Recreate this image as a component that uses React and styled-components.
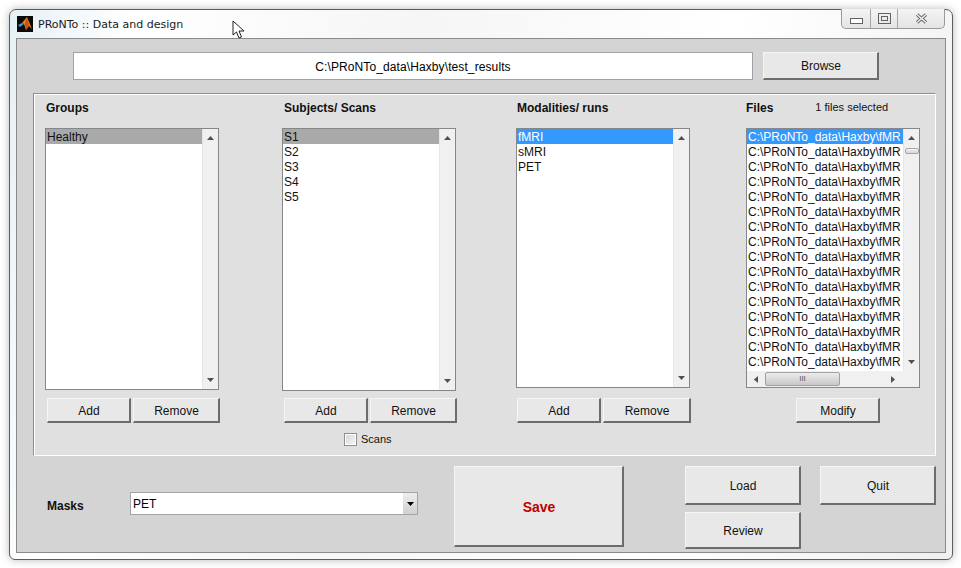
import styled, { createGlobalStyle } from "styled-components";

const GlobalStyle = createGlobalStyle`
    html, body {
        margin: 0;
        padding: 0;
        background: #ffffff;
    }
    body {
        font-family: "Liberation Sans", Arial, sans-serif;
        font-size: 12px;
        color: #000000;
    }
`

const fileRows = Array.from({ length: 16 }, () => "C:\\PRoNTo_data\\Haxby\\fMR")

const columns = [
    { title: "Groups", indent: 1, items: ["Healthy"], selected: "gray", height: 262, addLeft: 2, addWidth: 84, removeWidth: 87 },
    { title: "Subjects/ Scans", indent: 2, items: ["S1", "S2", "S3", "S4", "S5"], selected: "gray", height: 263, addLeft: 2, addWidth: 84, removeWidth: 87, scans: true },
    { title: "Modalities/ runs", indent: 1, items: ["fMRI", "sMRI", "PET"], selected: "blue", height: 260, addLeft: 1, addWidth: 84, removeWidth: 88 },
]

function TriangleUp() {
    return <svg width="7" height="4" viewBox="0 0 7 4"><path d="M3.5 0 L7 4 L0 4 Z" fill="#505050" /></svg>
}

function TriangleDown({ color = "#505050" }) {
    return <svg width="7" height="4" viewBox="0 0 7 4"><path d="M0 0 L7 0 L3.5 4 Z" fill={color} /></svg>
}

function MatlabIcon() {
    return (
        <svg width="16" height="16" viewBox="0 0 16 16">
            <rect width="16" height="16" fill="#0a0a0a" />
            <path d="M1 9 L5 7 L7 8 L3 11 Z" fill="#3a9fd0" />
            <path d="M5 7 L10 1 L15 13 L12 10 L9 14 L7 8 Z" fill="#e8801e" />
            <path d="M10 1 L12 10 L9 14 L8 8 Z" fill="#c4501a" />
        </svg>
    )
}

function Cursor() {
    return (
        <svg width="14" height="20" viewBox="0 0 14 20">
            <path d="M1 1 L1 15 L4.5 12 L7 18 L9.5 17 L7 11 L12 11 Z" fill="#ffffff" stroke="#222222" strokeWidth="1" />
        </svg>
    )
}

function VerticalBar({ thumb }) {
    return (
        <VBar>
            <TriangleUp />
            {thumb && <VThumb />}
            <TriangleDown />
        </VBar>
    )
}

function Listing({ items, selected, height, thumb, horizontal }) {
    return (
        <ListBox $height={height}>
            <ListTop>
                <Rows>
                    {items.map((item, i) => (
                        <Row key={i} $selected={i === 0 ? selected : null}>{item}</Row>
                    ))}
                </Rows>
                <VerticalBar thumb={thumb} />
            </ListTop>
            {horizontal && (
                <HBar>
                    <svg width="4" height="7" viewBox="0 0 4 7"><path d="M4 0 L4 7 L0 3.5 Z" fill="#505050" /></svg>
                    <HThumb>III</HThumb>
                    <svg width="4" height="7" viewBox="0 0 4 7"><path d="M0 0 L0 7 L4 3.5 Z" fill="#505050" /></svg>
                </HBar>
            )}
        </ListBox>
    )
}

export default function App() {
    return (
        <>
            <GlobalStyle />
            <Page>
                <Win>
                    <TitleBar>
                        <MatlabIcon />
                        <WinTitle>PRoNTo :: Data and design</WinTitle>
                        <WinButtons>
                            <WinButton $width={28}><MinIcon /></WinButton>
                            <WinButton $width={26}><MaxIcon><span /></MaxIcon></WinButton>
                            <WinButton $width={46} $last>
                                <svg width="13" height="11" viewBox="0 0 13 11">
                                    <path d="M2 1.5 L11 9.5 M11 1.5 L2 9.5" stroke="#666b70" strokeWidth="3.4" fill="none" />
                                    <path d="M2 1.5 L11 9.5 M11 1.5 L2 9.5" stroke="#f2f2f2" strokeWidth="1.4" fill="none" />
                                </svg>
                            </WinButton>
                        </WinButtons>
                    </TitleBar>
                    <Body>
                        <PathRow>
                            <PathField>C:\PRoNTo_data\Haxby\test_results</PathField>
                            <PushButton $width={116} $height={28}>Browse</PushButton>
                        </PathRow>
                        <Panel>
                            {columns.map((col) => (
                                <Column key={col.title}>
                                    <Heading $indent={col.indent}>{col.title}</Heading>
                                    <ListSlot>
                                        <Listing items={col.items} selected={col.selected} height={col.height} />
                                    </ListSlot>
                                    <ButtonRow $left={col.addLeft}>
                                        <PushButton $width={col.addWidth} $height={25}>Add</PushButton>
                                        <PushButton $width={col.removeWidth} $height={25}>Remove</PushButton>
                                    </ButtonRow>
                                    {col.scans && (
                                        <ScansRow>
                                            <CheckBox />
                                            <span>Scans</span>
                                        </ScansRow>
                                    )}
                                </Column>
                            ))}
                            <Column>
                                <Heading $indent={0}>
                                    Files
                                    <SelectedNote>1 files selected</SelectedNote>
                                </Heading>
                                <ListSlot>
                                    <Listing items={fileRows} selected="blue" height={260} thumb horizontal />
                                </ListSlot>
                                <ButtonRow $left={50}>
                                    <PushButton $width={84} $height={25}>Modify</PushButton>
                                </ButtonRow>
                            </Column>
                        </Panel>
                        <BottomRow>
                            <MasksGroup>
                                <MasksLabel>Masks</MasksLabel>
                                <Combo>
                                    <ComboText>PET</ComboText>
                                    <ComboArrow><TriangleDown color="#000000" /></ComboArrow>
                                </Combo>
                            </MasksGroup>
                            <SaveButton>Save</SaveButton>
                            <Stack>
                                <PushButton $width={116} $height={39}>Load</PushButton>
                                <PushButton $width={116} $height={37}>Review</PushButton>
                            </Stack>
                            <PushButton $width={116} $height={39}>Quit</PushButton>
                        </BottomRow>
                    </Body>
                    <Pointer><Cursor /></Pointer>
                </Win>
            </Page>
        </>
    )
}

const Page = styled.div`
    width: 961px;
    height: 568px;
    padding: 9px 0 0 9px;
    box-sizing: border-box;
    overflow: hidden;
`

const Win = styled.div`
    position: relative;
    width: 944px;
    height: 551px;
    box-sizing: border-box;
    border: 1px solid #5c5c5c;
    border-radius: 7px 7px 6px 6px;
    padding: 0 6px 6px 6px;
    background: linear-gradient(100deg, #e6f0f6 0%, #ffffff 12%, #f6f6f6 40%, #ffffff 70%, #f0f0f0 100%);
    box-shadow: 0 0 9px rgba(0, 0, 0, 0.28);
`

const TitleBar = styled.div`
    display: flex;
    align-items: flex-start;
    height: 28px;
    padding: 6px 0 0 1px;
    box-sizing: border-box;
    position: relative;
`

const WinTitle = styled.div`
    margin-left: 5px;
    font-family: "DejaVu Sans", Tahoma, sans-serif;
    font-size: 11px;
    line-height: 17px;
    color: #1a1a1a;
`

const WinButtons = styled.div`
    position: absolute;
    top: -1px;
    right: 1px;
    display: flex;
    height: 19px;
    border: 1px solid #9a9a9a;
    border-top: none;
    border-radius: 0 0 5px 5px;
    background: linear-gradient(#f4f4f4, #e4e4e4);
`

const WinButton = styled.div`
    width: ${(props) => props.$width}px;
    display: flex;
    align-items: center;
    justify-content: center;
    border-right: ${(props) => (props.$last ? "none" : "1px solid #a8a8a8")};
`

const MinIcon = styled.div`
    width: 11px;
    height: 4px;
    margin-top: 5px;
    border: 1px solid #5f6368;
    background: #ffffff;
`

const MaxIcon = styled.div`
    width: 11px;
    height: 9px;
    border: 1px solid #5f6368;
    display: flex;
    align-items: center;
    justify-content: center;

    span {
        width: 5px;
        height: 3px;
        border: 1px solid #5f6368;
    }
`

const Pointer = styled.div`
    position: absolute;
    left: 222px;
    top: 10px;
    line-height: 0;
`

const Body = styled.div`
    width: 930px;
    height: 515px;
    box-sizing: border-box;
    border: 1px solid #8a8a8a;
    background: #d4d4d4;
    padding-top: 13px;
`

const PathRow = styled.div`
    display: flex;
    gap: 10px;
    margin-left: 56px;
`

const PathField = styled.div`
    width: 680px;
    height: 28px;
    box-sizing: border-box;
    padding-top: 1px;
    border: 1px solid #a0a0a8;
    background: #ffffff;
    display: flex;
    align-items: center;
    justify-content: center;
    font-size: 12px;
    letter-spacing: 0.1px;
`

const PushButton = styled.button`
    width: ${(props) => props.$width}px;
    height: ${(props) => props.$height}px;
    box-sizing: border-box;
    padding: 1px 0 0 1px;
    background: #e8e8e8;
    border-style: solid;
    border-width: 1px 2px 2px 1px;
    border-color: #f6f6f6 #6c6c6c #6c6c6c #f6f6f6;
    font-family: "Liberation Sans", Arial, sans-serif;
    font-size: 12px;
    color: #111111;
`

const Panel = styled.div`
    width: 903px;
    height: 363px;
    box-sizing: border-box;
    margin: 13px 0 0 16px;
    padding-left: 11px;
    background: #e0e0e0;
    border-style: solid;
    border-width: 1px;
    border-color: #8f8f8f #ffffff #ffffff #8f8f8f;
    box-shadow: inset 1px 1px 0 #ffffff;
    display: grid;
    grid-template-columns: 237px 234px 230px 174px;
`

const Column = styled.div`
    display: flex;
    flex-direction: column;
`

const Heading = styled.div`
    height: 34px;
    box-sizing: border-box;
    padding: 7px 0 0 ${(props) => props.$indent}px;
    font-size: 12px;
    font-weight: 700;
    line-height: 14px;
    color: #111111;
    display: flex;
    align-items: flex-start;
`

const SelectedNote = styled.span`
    margin-left: 42px;
    margin-top: -1px;
    font-size: 11px;
    font-weight: 400;
`

const ListSlot = styled.div`
    height: 270px;
`

const ListBox = styled.div`
    width: 174px;
    height: ${(props) => props.$height}px;
    box-sizing: border-box;
    border: 1px solid #84878c;
    background: #ffffff;
    display: flex;
    flex-direction: column;
    overflow: hidden;
`

const ListTop = styled.div`
    flex: 1;
    min-height: 0;
    display: flex;
`

const Rows = styled.div`
    flex: 1;
    min-width: 0;
    overflow: hidden;
`

const Row = styled.div`
    height: 15px;
    box-sizing: border-box;
    padding: 1px 0 0 1px;
    line-height: 15px;
    font-size: 12px;
    white-space: nowrap;
    overflow: hidden;
    background: ${(props) =>
        props.$selected === "gray" ? "#a9a9a9" : props.$selected === "blue" ? "#3399ff" : "transparent"};
    color: ${(props) => (props.$selected === "blue" ? "#ffffff" : "#111111")};
`

const VBar = styled.div`
    position: relative;
    flex: none;
    width: 16px;
    background: #f0f0f0;
    border-left: 1px solid #e6e6e6;
    box-sizing: border-box;
    display: flex;
    flex-direction: column;
    align-items: center;
    justify-content: space-between;
    padding: 7px 0;
`

const VThumb = styled.div`
    position: absolute;
    top: 19px;
    left: 1px;
    width: 14px;
    height: 6px;
    box-sizing: border-box;
    border: 1px solid #a8a8a8;
    border-radius: 2px;
    background: linear-gradient(#f6f6f6, #d2d2d2);
`

const HBar = styled.div`
    position: relative;
    flex: none;
    height: 16px;
    background: #f0f0f0;
    display: flex;
    align-items: center;
    justify-content: space-between;
    padding: 0 24px 0 7px;
`

const HThumb = styled.div`
    position: absolute;
    left: 18px;
    top: 1px;
    width: 75px;
    height: 14px;
    box-sizing: border-box;
    border: 1px solid #a0a0a0;
    border-radius: 2px;
    background: linear-gradient(#ececec, #c8c8c8);
    font-size: 8px;
    line-height: 12px;
    text-align: center;
    color: #555555;
`

const ButtonRow = styled.div`
    display: flex;
    gap: 2px;
    margin-left: ${(props) => props.$left}px;
`

const ScansRow = styled.div`
    display: flex;
    align-items: center;
    gap: 4px;
    margin: 9px 0 0 62px;
    font-size: 11px;
    line-height: 14px;
    color: #111111;
`

const CheckBox = styled.div`
    width: 13px;
    height: 13px;
    box-sizing: border-box;
    border: 1px solid #8e8f8f;
    background: linear-gradient(135deg, #d4d6d8, #f6f6f6);
    box-shadow: inset 0 0 0 1px #ffffff;
`

const BottomRow = styled.div`
    display: flex;
    align-items: flex-start;
    margin: 10px 0 0 30px;
`

const MasksGroup = styled.div`
    display: flex;
    align-items: center;
    width: 407px;
    margin-top: 26px;
`

const MasksLabel = styled.div`
    width: 83px;
    flex: none;
    padding-top: 4px;
    font-size: 12px;
    font-weight: 700;
    color: #111111;
`

const Combo = styled.div`
    width: 288px;
    height: 23px;
    box-sizing: border-box;
    border: 1px solid #a4a4a4;
    background: #ffffff;
    display: flex;
    align-items: stretch;
`

const ComboText = styled.div`
    flex: 1;
    padding-left: 2px;
    line-height: 22px;
    font-size: 12px;
`

const ComboArrow = styled.div`
    width: 14px;
    background: linear-gradient(#eeeeee, #d0d0d0);
    display: flex;
    align-items: center;
    justify-content: center;
`

const SaveButton = styled(PushButton).attrs({ $width: 170, $height: 81 })`
    margin-right: 61px;
    font-size: 14px;
    font-weight: 700;
    color: #bf0000;
`

const Stack = styled.div`
    display: flex;
    flex-direction: column;
    gap: 7px;
    margin-right: 19px;
`
